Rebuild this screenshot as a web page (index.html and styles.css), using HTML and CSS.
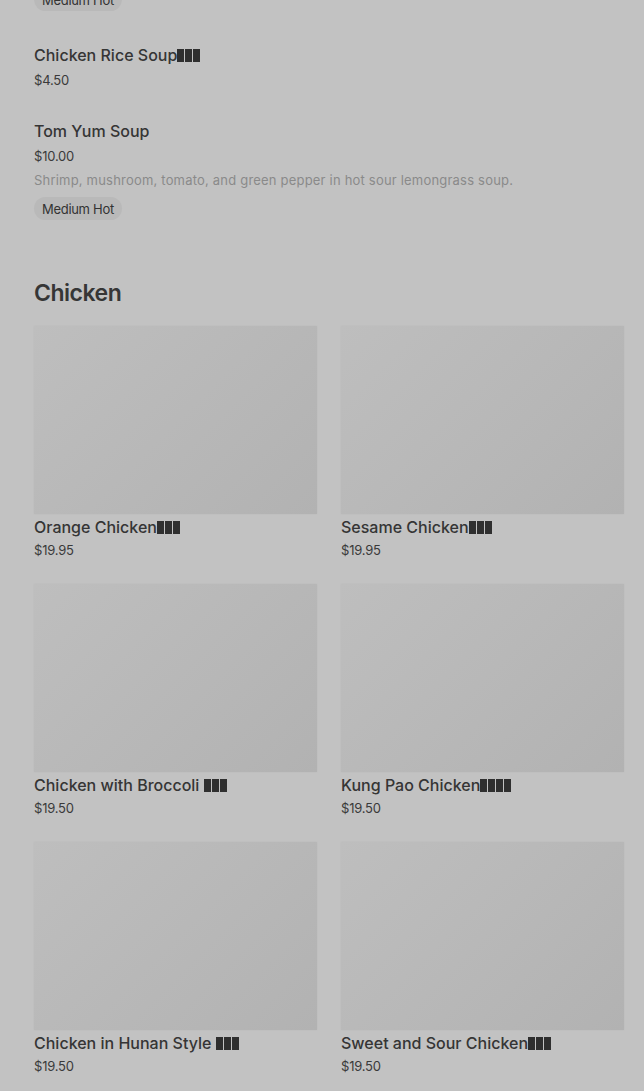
FILE: index.html
```html
<!DOCTYPE html>
<html lang="en">
<head>
<meta charset="utf-8">
<title>Menu</title>
<link rel="stylesheet" href="styles.css">
</head>
<body>
<main class="page">
  <section class="section section-soup">
    <ul class="list">
      <li class="item item-cut">
        <span class="pill">Medium Hot</span>
      </li>
      <li class="item">
        <h3 class="name">Chicken Rice Soup<span class="cjk"><i class="tofu"></i><i class="tofu"></i><i class="tofu"></i></span></h3>
        <p class="price">$4.50</p>
      </li>
      <li class="item">
        <h3 class="name">Tom Yum Soup</h3>
        <p class="price">$10.00</p>
        <p class="desc">Shrimp, mushroom, tomato, and green pepper in hot sour lemongrass soup.</p>
        <span class="pill">Medium Hot</span>
      </li>
    </ul>
  </section>

  <section class="section section-chicken">
    <h2 class="section-title">Chicken</h2>
    <div class="grid">
      <article class="card">
        <div class="photo"></div>
        <h3 class="name">Orange Chicken<span class="cjk"><i class="tofu"></i><i class="tofu"></i><i class="tofu"></i></span></h3>
        <p class="price">$19.95</p>
      </article>
      <article class="card">
        <div class="photo"></div>
        <h3 class="name">Sesame Chicken<span class="cjk"><i class="tofu"></i><i class="tofu"></i><i class="tofu"></i></span></h3>
        <p class="price">$19.95</p>
      </article>
      <article class="card">
        <div class="photo"></div>
        <h3 class="name">Chicken with Broccoli <span class="cjk"><i class="tofu"></i><i class="tofu"></i><i class="tofu"></i></span></h3>
        <p class="price">$19.50</p>
      </article>
      <article class="card">
        <div class="photo"></div>
        <h3 class="name">Kung Pao Chicken<span class="cjk"><i class="tofu"></i><i class="tofu"></i><i class="tofu"></i><i class="tofu"></i></span></h3>
        <p class="price">$19.50</p>
      </article>
      <article class="card">
        <div class="photo"></div>
        <h3 class="name">Chicken in Hunan Style <span class="cjk"><i class="tofu"></i><i class="tofu"></i><i class="tofu"></i></span></h3>
        <p class="price">$19.50</p>
      </article>
      <article class="card">
        <div class="photo"></div>
        <h3 class="name">Sweet and Sour Chicken<span class="cjk"><i class="tofu"></i><i class="tofu"></i><i class="tofu"></i></span></h3>
        <p class="price">$19.50</p>
      </article>
    </div>
  </section>
</main>
</body>
</html>
```

FILE: styles.css
```css
* {
  box-sizing: border-box;
}

html,
body {
  margin: 0;
  padding: 0;
  background: #c2c2c2;
}

body {
  font-family: Inter, "Noto Sans", "Liberation Sans", sans-serif;
  color: #333333;
  overflow: hidden;
}

.page {
  padding: 0 20px 0 34px;
}

.list {
  list-style: none;
  margin: -12px 0 0 0;
  padding: 0;
  display: flex;
  flex-direction: column;
  gap: 29px;
}

.item {
  display: flex;
  flex-direction: column;
  align-items: flex-start;
}

.item-cut {
  margin-bottom: 3px;
}

.name {
  margin: 0;
  font-size: 16px;
  line-height: 24px;
  font-weight: 500;
  color: #353535;
  display: flex;
  align-items: center;
  white-space: pre;
}

.cjk {
  display: inline-flex;
  gap: 1px;
  align-items: center;
}

.tofu {
  display: block;
  width: 7px;
  height: 13px;
  background: #2f2f2f;
}

.price {
  margin: 3px 0 0 0;
  font-size: 13px;
  line-height: 20px;
  color: #3a3a3a;
  letter-spacing: -0.2px;
}

.desc {
  margin: 4px 0 0 0;
  font-size: 13px;
  line-height: 20px;
  color: #8a8a8a;
  letter-spacing: 0.2px;
}

.pill {
  display: inline-flex;
  align-items: center;
  height: 23px;
  padding: 0 8px;
  margin-top: 7px;
  border-radius: 12px;
  background: #b9b9b9;
  font-size: 13px;
  letter-spacing: -0.3px;
  color: #333333;
}

.item-cut .pill {
  margin-top: 0;
}

.section-chicken {
  margin-top: 57px;
}

.section-title {
  margin: 0 0 17px 0;
  font-size: 23px;
  line-height: 32px;
  font-weight: 600;
  letter-spacing: -0.5px;
  color: #363636;
}

.grid {
  display: grid;
  grid-template-columns: 283px 283px;
  column-gap: 24px;
  row-gap: 24px;
}

.card {
  display: flex;
  flex-direction: column;
}

.card .name {
  margin-top: 1px;
}

.card .price {
  margin-top: 1px;
}

.photo {
  height: 188px;
  background: linear-gradient(135deg, #bebebe 0%, #b8b8b8 50%, #b2b2b2 100%);
  box-shadow: 0 0 2px rgba(0, 0, 0, 0.04);
}
```
